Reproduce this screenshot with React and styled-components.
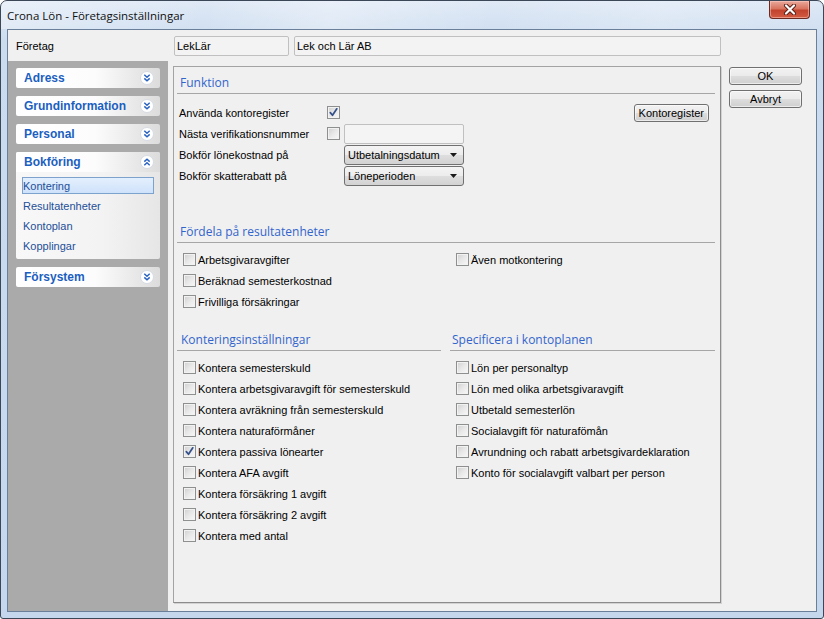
import React from 'react';
import styled, { createGlobalStyle } from 'styled-components';

const Global = createGlobalStyle`
  html, body { margin: 0; padding: 0; background: #fff; }
  body { width: 824px; height: 619px; overflow: hidden; font-family: "Liberation Sans", Arial, sans-serif; }
  * { box-sizing: border-box; }
`;

const Window = styled.div`
  width: 824px;
  height: 619px;
  display: flex;
  flex-direction: column;
  border: 1px solid #3b4656;
  border-radius: 7px 7px 3px 3px;
  background: linear-gradient(180deg, #dfe9f6 0px, #ccdcef 40px, #c4d7ed 100%);
  overflow: hidden;
`;

const TitleBar = styled.div`
  height: 28px;
  display: flex;
  align-items: center;
  padding-left: 6px;
  background: linear-gradient(100deg, rgba(255,255,255,0.35) 0%, rgba(255,255,255,0) 25%, rgba(255,255,255,0.3) 40%, rgba(255,255,255,0) 60%, rgba(255,255,255,0.2) 80%, rgba(255,255,255,0) 100%);
`;

const Title = styled.span`
  font-family: "Open Sans", "Liberation Sans", sans-serif;
  font-size: 11.5px;
  color: #111;
  margin-top: 1px;
`;

const CloseButton = styled.div`
  align-self: flex-start;
  margin-left: auto;
  margin-right: 13px;
  width: 41px;
  height: 18px;
  border: 1px solid #6b2a22;
  border-top: none;
  border-radius: 0 0 4px 4px;
  background: linear-gradient(180deg, #e9a99c 0%, #d8745f 45%, #c2432e 55%, #d35c43 100%);
  box-shadow: inset 0 0 0 1px rgba(255, 210, 200, 0.5);
  display: flex;
  align-items: center;
  justify-content: center;
`;

const Client = styled.div`
  flex: 1;
  margin: 0 6px 6px 6px;
  border: 1px solid #6a7f99;
  background: #f0f0f0;
  display: flex;
  flex-direction: column;
`;

const TopRow = styled.div`
  height: 31px;
  display: flex;
  align-items: center;
  padding-left: 8px;
`;

const TopLabel = styled.span`
  width: 158px;
  font-size: 11px;
  color: #000;
`;

const ReadInput = styled.div`
  height: 20px;
  width: ${p => p.$w}px;
  margin-right: ${p => p.$mr || 0}px;
  border: 1px solid #c0c0c0;
  border-radius: 2px;
  background: ${p => p.$bg || '#f3f3f3'};
  font-size: 11px;
  color: #000;
  display: flex;
  align-items: center;
  padding-left: 2px;
`;

const Body = styled.div`
  flex: 1;
  display: flex;
`;

const Sidebar = styled.div`
  width: 160px;
  background: #aaaaaa;
  padding: 7px 8px;
  display: flex;
  flex-direction: column;
  gap: 8px;
`;

const SidePanel = styled.div`
  border-radius: 2px;
  overflow: hidden;
  background: linear-gradient(90deg, #f8f8f8 0%, #f3f3f3 60%, #e6e6e6 100%);
`;

const SideHeader = styled.div`
  height: 20px;
  display: flex;
  align-items: center;
  justify-content: space-between;
  padding: 0 6px 0 8px;
  background: linear-gradient(90deg, #ffffff 0%, #fcfcfc 55%, #dcdcdc 100%);
  font-weight: bold;
  font-size: 12px;
  color: #1b5fc1;
`;

const SideBody = styled.div`
  padding: 5px 6px 5px 6px;
  display: flex;
  flex-direction: column;
  gap: 3px;
`;

const SideItem = styled.div`
  height: 17px;
  display: flex;
  align-items: center;
  font-size: 11px;
  color: #234f98;
  padding-left: 0;
  border: 1px solid ${p => (p.$active ? '#7da2ce' : 'transparent')};
  background: ${p => (p.$active ? 'linear-gradient(180deg, #e3effd 0%, #cfe2fb 100%)' : 'transparent')};
`;

const MainArea = styled.div`
  flex: 1;
  display: flex;
  gap: 8px;
  padding: 5px 0 8px 5px;
`;

const Panel = styled.div`
  width: 548px;
  border: 1px solid #a3a3a3;
  border-right-color: #8c8c8c;
  border-bottom-color: #8c8c8c;
  box-shadow: 1px 1px 0 #d2d2d2;
  padding: 5px 5px 0 3px;
  display: flex;
  flex-direction: column;
`;

const Heading = styled.div`
  height: 22px;
  line-height: 21px;
  padding-left: ${p => p.$pl ?? 3}px;
  border-bottom: 1px solid #a6a6a6;
  margin-top: ${p => p.$mt || 0}px;
  font-family: "Open Sans", "Liberation Sans", sans-serif;
  font-size: 12px;
  color: #3265cc;
`;

const FormGrid = styled.div`
  margin-top: 8px;
  display: grid;
  grid-template-columns: 150px 17px 120px 1fr;
  grid-auto-rows: 21px;
  align-items: center;
`;

const FormLabel = styled.span`
  padding-left: 2px;
  font-size: 11px;
  color: #000;
`;

const Select = styled.div`
  height: 20px;
  border: 1px solid #707070;
  border-radius: 3px;
  background: linear-gradient(180deg, #f4f4f4 0%, #ececec 50%, #dedede 51%, #d2d2d2 100%);
  display: flex;
  align-items: center;
  justify-content: space-between;
  padding: 0 6px 0 3px;
  font-size: 11px;
  color: #000;
`;

const Button = styled.div`
  height: 18px;
  width: ${p => (p.$w ? `${p.$w}px` : 'auto')};
  padding: 0 ${p => p.$px ?? 0}px;
  justify-self: end;
  margin-right: ${p => p.$mr || 0}px;
  border: 1px solid #707070;
  border-radius: 3px;
  background: linear-gradient(180deg, #f2f2f2 0%, #ebebeb 48%, #dddddd 52%, #cfcfcf 100%);
  box-shadow: inset 0 0 0 1px rgba(255,255,255,0.6);
  display: flex;
  align-items: center;
  justify-content: center;
  font-size: 11px;
  color: #000;
`;

const ButtonColumn = styled.div`
  width: 73px;
  padding-top: 1px;
  display: flex;
  flex-direction: column;
  gap: 5px;
`;

const TwoCols = styled.div`
  margin-top: 6px;
  padding-left: 6px;
  display: grid;
  grid-template-columns: 273px 1fr;
`;

const CheckList = styled.div`
  display: flex;
  flex-direction: column;
  padding-left: ${p => p.$pl || 0}px;
  margin-top: ${p => p.$mt || 0}px;
`;

const CheckRow = styled.label`
  height: 21px;
  display: flex;
  align-items: center;
  gap: 2px;
  font-size: 11px;
  color: #000;
`;

const Box = styled.span`
  width: 13px;
  height: 13px;
  flex: none;
  border: 1px solid #8e8f8f;
  background: linear-gradient(135deg, #cfcfcf 0%, #e8e8e8 50%, #f8f8f8 100%);
  box-shadow: inset 0 0 0 1px #f2f2f2;
  display: flex;
  align-items: center;
  justify-content: center;
`;

const SplitSections = styled.div`
  margin-top: 17px;
  display: grid;
  grid-template-columns: 264px 265px;
  column-gap: 9px;
`;

function CheckBox({ checked }) {
  return (
    <Box>
      {checked && (
        <svg width="11" height="11" viewBox="0 0 11 11">
          <path d="M2.3 5.6 L4.5 8.3 L8.8 1.8" fill="none" stroke="#34508a" strokeWidth="1.7" strokeLinecap="round" strokeLinejoin="round" />
        </svg>
      )}
    </Box>
  );
}

function Check({ label, checked }) {
  return (
    <CheckRow>
      <CheckBox checked={checked} />
      <span>{label}</span>
    </CheckRow>
  );
}

function Chevron({ up }) {
  return (
    <svg width="14" height="14" viewBox="0 0 14 14">
      <circle cx="7" cy="7" r="6.5" fill="#ffffff" stroke="#d6dbe3" />
      <g fill="none" stroke="#2a62c2" strokeWidth="1.5" transform={up ? 'rotate(180 7 7)' : undefined}>
        <path d="M4.3 3.8 L7 6.2 L9.7 3.8" />
        <path d="M4.3 7.4 L7 9.8 L9.7 7.4" />
      </g>
    </svg>
  );
}

function Arrow() {
  return (
    <svg width="7" height="4" viewBox="0 0 7 4">
      <path d="M0 0 H7 L3.5 4 Z" fill="#1a1a1a" />
    </svg>
  );
}

const sideSections = [
  { title: 'Adress' },
  { title: 'Grundinformation' },
  { title: 'Personal' },
  { title: 'Bokföring', open: true, items: ['Kontering', 'Resultatenheter', 'Kontoplan', 'Kopplingar'] },
  { title: 'Försystem' },
];

const konteringar = [
  ['Kontera semesterskuld', false],
  ['Kontera arbetsgivaravgift för semesterskuld', false],
  ['Kontera avräkning från semesterskuld', false],
  ['Kontera naturaförmåner', false],
  ['Kontera passiva lönearter', true],
  ['Kontera AFA avgift', false],
  ['Kontera försäkring 1 avgift', false],
  ['Kontera försäkring 2 avgift', false],
  ['Kontera med antal', false],
];

const specificera = [
  'Lön per personaltyp',
  'Lön med olika arbetsgivaravgift',
  'Utbetald semesterlön',
  'Socialavgift för naturafömån',
  'Avrundning och rabatt arbetsgivardeklaration',
  'Konto för socialavgift valbart per person',
];

export default function App() {
  return (
    <>
      <Global />
      <Window>
        <TitleBar>
          <Title>Crona Lön - Företagsinställningar</Title>
          <CloseButton>
            <svg width="14" height="11" viewBox="0 0 14 11">
              <path d="M3 1.5 L11 9.5 M11 1.5 L3 9.5" stroke="#5a1d14" strokeWidth="4" strokeLinecap="round" />
              <path d="M3 1.5 L11 9.5 M11 1.5 L3 9.5" stroke="#ffffff" strokeWidth="2.2" strokeLinecap="round" />
            </svg>
          </CloseButton>
        </TitleBar>
        <Client>
          <TopRow>
            <TopLabel>Företag</TopLabel>
            <ReadInput $w={115} $mr={5}>LekLär</ReadInput>
            <ReadInput $w={427}>Lek och Lär AB</ReadInput>
          </TopRow>
          <Body>
            <Sidebar>
              {sideSections.map(s => (
                <SidePanel key={s.title}>
                  <SideHeader>
                    <span>{s.title}</span>
                    <Chevron up={s.open} />
                  </SideHeader>
                  {s.open && (
                    <SideBody>
                      {s.items.map((it, i) => (
                        <SideItem key={it} $active={i === 0}>{it}</SideItem>
                      ))}
                    </SideBody>
                  )}
                </SidePanel>
              ))}
            </Sidebar>
            <MainArea>
              <Panel>
                <Heading>Funktion</Heading>
                <FormGrid>
                  <FormLabel>Använda kontoregister</FormLabel>
                  <CheckBox checked />
                  <span />
                  <Button $px={4} $mr={6}>Kontoregister</Button>

                  <FormLabel>Nästa verifikationsnummer</FormLabel>
                  <CheckBox />
                  <ReadInput $w={120} $bg="#f4f4f4">{''}</ReadInput>
                  <span />

                  <FormLabel>Bokför lönekostnad på</FormLabel>
                  <span />
                  <Select><span>Utbetalningsdatum</span><Arrow /></Select>
                  <span />

                  <FormLabel>Bokför skatterabatt på</FormLabel>
                  <span />
                  <Select><span>Löneperioden</span><Arrow /></Select>
                  <span />
                </FormGrid>

                <Heading $mt={35}>Fördela på resultatenheter</Heading>
                <TwoCols>
                  <CheckList>
                    <Check label="Arbetsgivaravgifter" />
                    <Check label="Beräknad semesterkostnad" />
                    <Check label="Frivilliga försäkringar" />
                  </CheckList>
                  <CheckList>
                    <Check label="Även motkontering" />
                  </CheckList>
                </TwoCols>

                <SplitSections>
                  <div>
                    <Heading $pl={4}>Konteringsinställningar</Heading>
                    <CheckList $pl={6} $mt={6}>
                      {konteringar.map(([l, c]) => (
                        <Check key={l} label={l} checked={c} />
                      ))}
                    </CheckList>
                  </div>
                  <div>
                    <Heading $pl={2}>Specificera i kontoplanen</Heading>
                    <CheckList $pl={6} $mt={6}>
                      {specificera.map(l => (
                        <Check key={l} label={l} />
                      ))}
                    </CheckList>
                  </div>
                </SplitSections>
              </Panel>
              <ButtonColumn>
                <Button $w={73}>OK</Button>
                <Button $w={73}>Avbryt</Button>
              </ButtonColumn>
            </MainArea>
          </Body>
        </Client>
      </Window>
    </>
  );
}
